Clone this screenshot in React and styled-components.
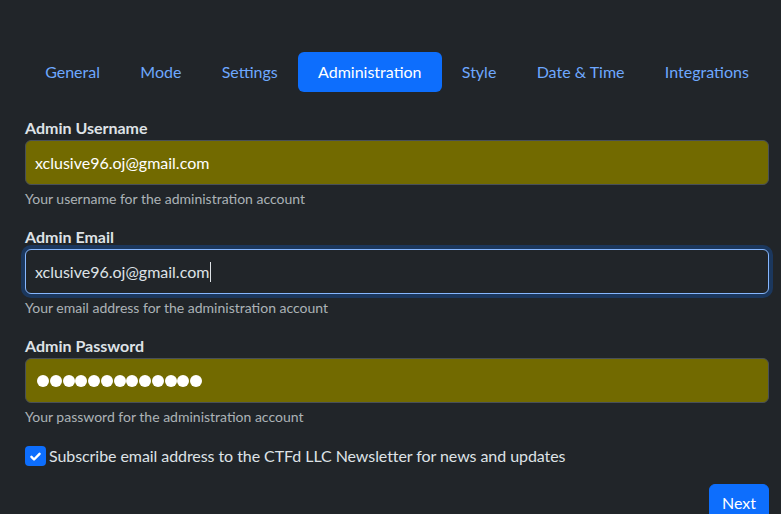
import React from 'react';
import styled, { createGlobalStyle } from 'styled-components';

const COLORS = {
  background: '#212529',
  text: '#dee2e6',
  muted: 'rgba(222, 226, 230, 0.75)',
  link: '#6ea8fe',
  primary: '#0d6efd',
  autofill: '#726a00',
  border: '#495057',
  focus: '#86b7fe',
};

const TABS = ['General', 'Mode', 'Settings', 'Administration', 'Style', 'Date & Time', 'Integrations'];

const GlobalStyle = createGlobalStyle`
  html, body {
    margin: 0;
    background: ${COLORS.background};
  }
  body {
    font-family: Lato, "Open Sans", sans-serif;
    color: ${COLORS.text};
    overflow: hidden;
  }
`;

function App() {
  return (
    <>
      <GlobalStyle />
      <Page>
        <Nav>
          {TABS.map((tab) => (
            <NavItem key={tab} active={tab === 'Administration'}>{tab}</NavItem>
          ))}
        </Nav>

        <Form>
          <Group>
            <Label>Admin Username</Label>
            <Field filled>xclusive96.oj@gmail.com</Field>
            <Help>Your username for the administration account</Help>
          </Group>

          <Group>
            <Label>Admin Email</Label>
            <Field focused>xclusive96.oj@gmail.com<Caret /></Field>
            <Help>Your email address for the administration account</Help>
          </Group>

          <Group>
            <Label>Admin Password</Label>
            <Field filled>
              <Dots>
                {Array.from({ length: 13 }).map((_, i) => <Dot key={i} />)}
              </Dots>
            </Field>
            <Help>Your password for the administration account</Help>
          </Group>

          <Check>
            <Box>
              <svg width="13" height="13" viewBox="0 0 16 16">
                <path d="M3 8.5l3.2 3.2L13 4.8" fill="none" stroke="#fff" strokeWidth="3" strokeLinecap="round" strokeLinejoin="round" />
              </svg>
            </Box>
            <CheckText>Subscribe email address to the CTFd LLC Newsletter for news and updates</CheckText>
          </Check>

          <Actions>
            <Button>Next</Button>
          </Actions>
        </Form>
      </Page>
    </>
  );
}

const Page = styled.div`
    padding: 52px 12px 0 25px;
    height: 514px;
    box-sizing: border-box;
`;

const Nav = styled.ul`
    display: flex;
    list-style: none;
    margin: 0;
    padding: 0;
`;

const NavItem = styled.li`
    flex: 1 1 auto;
    text-align: center;
    padding: 0 16px;
    height: 40px;
    line-height: 40px;
    font-size: 16px;
    border-radius: 6px;
    color: ${(p) => (p.active ? '#fff' : COLORS.link)};
    background: ${(p) => (p.active ? COLORS.primary : 'transparent')};
`;

const Form = styled.div`
    margin-top: 24px;
    display: flex;
    flex-direction: column;
`;

const Group = styled.div`
    margin-bottom: 16px;
`;

const Label = styled.div`
    font-weight: bold;
    font-size: 16px;
    line-height: 24px;
`;

const Field = styled.div`
    height: 45px;
    box-sizing: border-box;
    display: flex;
    align-items: center;
    padding: 0 9px;
    font-size: 16px;
    border-radius: 6px;
    color: ${(p) => (p.filled ? '#fff' : COLORS.text)};
    background: ${(p) => (p.filled ? COLORS.autofill : COLORS.background)};
    border: 1px solid ${(p) => (p.focused ? COLORS.focus : COLORS.border)};
    box-shadow: ${(p) => (p.focused ? '0 0 0 4px rgba(13, 110, 253, 0.25)' : 'none')};
`;

const Caret = styled.span`
    display: inline-block;
    width: 1px;
    height: 20px;
    margin-left: 1px;
    background: ${COLORS.text};
`;

const Dots = styled.div`
    display: flex;
    gap: 0.75px;
    margin-left: 2px;
`;

const Dot = styled.span`
    width: 12px;
    height: 12px;
    border-radius: 50%;
    background: #fff;
`;

const Help = styled.div`
    margin-top: 3px;
    font-size: 14px;
    line-height: 21px;
    color: ${COLORS.muted};
`;

const Check = styled.div`
    display: flex;
    align-items: center;
    gap: 3px;
    margin-top: 1px;
`;

const Box = styled.span`
    width: 21px;
    height: 20px;
    border-radius: 4px;
    background: ${COLORS.primary};
    display: flex;
    align-items: center;
    justify-content: center;
`;

const CheckText = styled.span`
    font-size: 16px;
    line-height: 24px;
    letter-spacing: -0.07px;
`;

const Actions = styled.div`
    display: flex;
    justify-content: flex-end;
    margin-top: 16px;
`;

const Button = styled.button`
    background: ${COLORS.primary};
    border: 1px solid ${COLORS.primary};
    border-radius: 6px;
    color: #fff;
    font-family: Lato, sans-serif;
    font-size: 16px;
    line-height: 24px;
    padding: 6px 12px;
`;

export default App;
